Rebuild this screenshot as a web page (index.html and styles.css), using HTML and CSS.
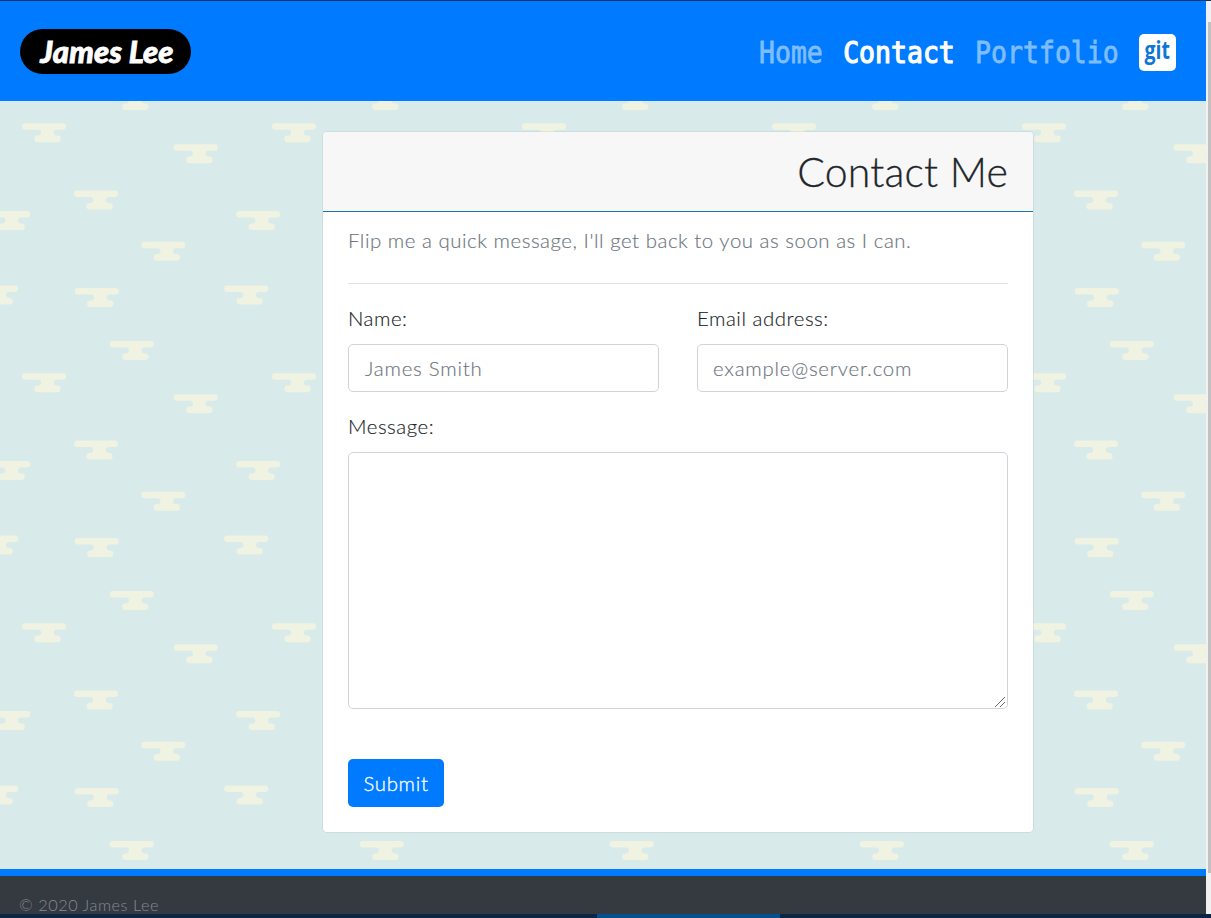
FILE: index.html
```html
<!DOCTYPE html>
<html lang="en">
<head>
<meta charset="utf-8">
<title>Contact Me</title>
<link rel="stylesheet" href="styles.css">
</head>
<body>
<div class="window">
  <div class="page">
    <header class="navbar">
      <a class="brand"><span>James Lee</span></a>
      <nav class="nav">
        <a class="nav-link">Home</a>
        <a class="nav-link active">Contact</a>
        <a class="nav-link">Portfolio</a>
        <a class="git"><span>git</span></a>
      </nav>
    </header>
    <main class="main">
      <svg class="clouds" width="1206" height="869" aria-hidden="true">
        <defs>
          <path id="cloud" d="M3.3 0H40.7a3.3 3.3 0 0 1 0 6.6H34.5c-3.6 0-3.6 5.8 0 5.8h.8a3.3 3.3 0 0 1 0 6.6H15.7a3.3 3.3 0 0 1 0-6.6h.8c3.6 0 3.6-5.8 0-5.8H3.3a3.3 3.3 0 0 1 0-6.6z"/>
          <pattern id="sky" width="250" height="250" patternUnits="userSpaceOnUse">
            <g fill="#f0f2e2">
              <use href="#cloud" x="109.8" y="91"/>
              <use href="#cloud" x="22" y="123.2"/>
              <use href="#cloud" x="173.8" y="144.2"/>
              <use href="#cloud" x="74" y="190.5"/>
              <use href="#cloud" x="236.2" y="211"/>
              <use href="#cloud" x="-13.8" y="211"/>
              <use href="#cloud" x="141.3" y="241.7"/>
              <use href="#cloud" x="141.3" y="-8.3"/>
              <use href="#cloud" x="224.2" y="35.5"/>
              <use href="#cloud" x="-25.8" y="35.5"/>
              <use href="#cloud" x="74.8" y="38"/>
            </g>
          </pattern>
        </defs>
        <rect width="1206" height="869" fill="url(#sky)"/>
      </svg>
      <section class="card">
        <div class="card-header"><h1>Contact Me</h1></div>
        <form class="card-body">
          <p class="lead">Flip me a quick message, I'll get back to you as soon as I can.</p>
          <hr>
          <div class="row">
            <div class="field">
              <label for="name">Name:</label>
              <input class="i-name" id="name" type="text" placeholder="James Smith">
            </div>
            <div class="field">
              <label for="email">Email address:</label>
              <input id="email" type="text" placeholder="example@server.com">
            </div>
          </div>
          <div class="field message">
            <label for="message">Message:</label>
            <textarea id="message"></textarea>
            <svg class="grip" width="12" height="12" viewBox="0 0 12 12" aria-hidden="true"><path d="M1 11L11 1M6 11L11 6" stroke="#666" stroke-width="1"/></svg>
          </div>
          <button type="button">Submit</button>
        </form>
      </section>
    </main>
    <footer class="footer"><span>© 2020 James Lee</span></footer>
  </div>
  <div class="scrollbar"><div class="thumb"></div></div>
</div>
<div class="taskbar"><div class="task"></div></div>
</body>
</html>
```
FILE: styles.css
```css
* { box-sizing: border-box; }
body {
  margin: 0;
  height: 918px;
  overflow: hidden;
  border-top: 1px solid #07366b;
  font-family: Lato, "Open Sans", sans-serif;
  font-weight: 300;
  font-size: 20.4px;
  letter-spacing: .54px;
  color: #212529;
}
.window { display: flex; height: 913px; }
.page { width: 1206px; display: flex; flex-direction: column; }
.navbar {
  position: relative;
  z-index: 1;
  height: 100px;
  flex: none;
  padding: 2px 30px 0 20px;
  background: #007bff;
  display: flex;
  align-items: center;
  justify-content: space-between;
}
.brand {
  width: 171px;
  height: 45px;
  margin-top: -2px;
  padding-left: 3px;
  border-radius: 23px;
  background: #000;
  color: #fff;
  display: flex;
  align-items: center;
  justify-content: center;
  font-size: 31px;
  font-weight: 900;
  font-style: italic;
  letter-spacing: .1px;
  -webkit-text-stroke: .8px #fff;
  white-space: nowrap;
}
.nav { display: flex; align-items: center; gap: 20.3px; }
.nav-link {
  font: 26.5px/40px "DejaVu Sans Mono", monospace;
  letter-spacing: 0;
  color: #7fbdff;
  -webkit-text-stroke: .7px #7fbdff;
  transform: scaleY(1.12);
  margin-top: 2px;
}
.nav-link.active { color: #fff; -webkit-text-stroke: 1.1px #fff; }
.git {
  width: 37px;
  height: 37px;
  border-radius: 5px;
  background: #fff;
  color: #0f76d6;
  font: 700 25px/31px "Open Sans", sans-serif;
  letter-spacing: 0;
  display: flex;
  justify-content: center;
}
.git span { transform: scaleX(.78); }
.main {
  position: relative;
  flex: none;
  height: 768px;
  padding: 30px 0 0 322px;
  background: #d8ebea;
}
.clouds { position: absolute; left: 0; top: -101px; }
.card {
  position: relative;
  width: 712px;
  height: 702px;
  border: 1px solid rgba(0, 0, 0, .06);
  border-radius: 5px;
  background: #fff;
  background-clip: padding-box;
}
.card-header {
  height: 80px;
  padding: 0 25px;
  background: #f7f7f7;
  border-bottom: 1px solid #1c78b0;
  border-radius: 4px 4px 0 0;
  text-align: right;
}
h1 {
  margin: 0;
  font-size: 41px;
  font-weight: 300;
  line-height: 79px;
  letter-spacing: .2px;
  -webkit-text-stroke: .3px #212529;
}
.card-body { padding: 13px 25px 0; display: flex; flex-direction: column; }
.lead { margin: 0; line-height: 30px; color: #6c757d; -webkit-text-stroke: .15px #6c757d; }
hr { width: 100%; margin: 28px 0 19px; border: 0; border-top: 1px solid #e0e1e2; }
.row { display: grid; grid-template-columns: 311px 311px; justify-content: space-between; }
.field { display: flex; flex-direction: column; }
label { line-height: 30px; margin-bottom: 11px; -webkit-text-stroke: .15px #212529; }
input {
  height: 48px;
  padding: 0 15px;
  border: 1px solid #ced4da;
  border-radius: 5px;
  font: inherit;
  letter-spacing: .78px;
}
.i-name { padding-left: 16px; }
input::placeholder { color: #6c757d; opacity: 1; -webkit-text-stroke: .15px #6c757d; }
.message { position: relative; margin-top: 19px; }
textarea {
  height: 257px;
  border: 1px solid #ced4da;
  border-radius: 5px;
  background: #fff;
  resize: none;
}
.grip { position: absolute; right: 2px; bottom: 1px; }
button {
  width: 96px;
  height: 48px;
  margin-top: 50px;
  padding: 0 0 1px;
  border: 0;
  border-radius: 5px;
  background: #007bff;
  color: #fff;
  font: inherit;
  font-weight: 300;
  letter-spacing: .7px;
  -webkit-text-stroke: .3px #fff;
}
.footer {
  flex: none;
  height: 45px;
  overflow: hidden;
  border-top: 7px solid #007bff;
  background: #343a40;
  color: #868b90;
  padding: 17px 19px 0;
  font-size: 16.3px;
  line-height: 24px;
}
.scrollbar { width: 5px; background: #f1f1f1; padding: 21px 0 0 2px; }
.thumb { height: 851px; background: #c1c1c1; }
.taskbar { height: 4px; padding-left: 597px; background: #0b2643; }
.task { width: 183px; height: 4px; background: #07508f; }
```
